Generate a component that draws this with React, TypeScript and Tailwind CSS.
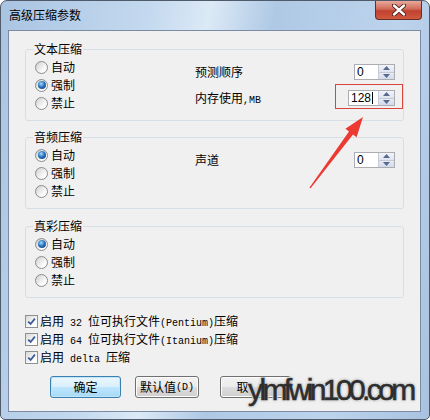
import React from 'react';

const cjk = "font-['Noto_Sans_CJK_SC',sans-serif]";
const mono = "font-['Liberation_Mono',monospace] text-[10px]";

function Radio({ label, checked }: { label: string; checked?: boolean }) {
  return (
    <div className="flex items-center gap-[3px] h-[18px]">
      <span className="w-[13px] h-[13px] rounded-full border border-[#8c8c8c] bg-[linear-gradient(135deg,#cfcfcf,#fbfbfb_70%)] flex items-center justify-center">
        {checked && (
          <span className="w-[8px] h-[8px] rounded-full bg-[radial-gradient(circle_at_40%_35%,#a9dcff,#2a76bf_45%,#0b3570)]" />
        )}
      </span>
      <span>{label}</span>
    </div>
  );
}

function Check({ children }: { children: React.ReactNode }) {
  return (
    <div className="flex items-center gap-[2px] h-[18px]">
      <span className="w-[13px] h-[13px] border border-[#8e8f8f] bg-[linear-gradient(135deg,#d8d8d8,#ffffff_75%)] flex items-center justify-center">
        <svg width="9" height="9" viewBox="0 0 9 9">
          <path d="M1.2 4.6 L3.6 7 L7.9 1.6" stroke="#3d5a99" strokeWidth="1.8" fill="none" />
        </svg>
      </span>
      <span className="whitespace-pre">{children}</span>
    </div>
  );
}

function Spinner({ value, wide }: { value: string; wide?: boolean }) {
  return (
    <div className={`flex h-[16px] border border-[#abadb3] bg-white ${wide ? 'w-[47px]' : 'w-[41px]'}`}>
      <div className="flex-1 flex items-center pl-[2px] font-['Liberation_Sans',sans-serif] text-[12px] leading-none text-black">
        {value}
        {wide && <span className="ml-[1px] w-[1px] h-[12px] bg-black" />}
      </div>
      <div className="w-[16px] flex flex-col border-l border-[#c7cbd6]">
        <div className="flex-1 flex items-center justify-center bg-[linear-gradient(#f2f4fa,#dfe4f0)] border-b border-[#c7cbd6]">
          <svg width="7" height="4" viewBox="0 0 7 4"><path d="M0 4 L3.5 0 L7 4 Z" fill="#56698f" /></svg>
        </div>
        <div className="flex-1 flex items-center justify-center bg-[linear-gradient(#e6eaf4,#d3daea)]">
          <svg width="7" height="4" viewBox="0 0 7 4"><path d="M0 0 L3.5 4 L7 0 Z" fill="#56698f" /></svg>
        </div>
      </div>
    </div>
  );
}

function Group({ title, children }: { title: string; children: React.ReactNode }) {
  return (
    <div className="relative h-[72px] border border-[#d5dfe5] rounded-[3px] flex">
      <span className="absolute left-[7px] -top-[9px] px-[1px] bg-[#f0f0f0] leading-[16px]">{title}</span>
      {children}
    </div>
  );
}

function Button({ children, primary, w }: { children: React.ReactNode; primary?: boolean; w: string }) {
  return (
    <div
      className={`${w} h-[22px] rounded-[3px] border flex items-center justify-center ${
        primary
          ? 'border-[#3c7fb1] bg-[linear-gradient(#eaf6fd,#d9f0fc_50%,#bee6fd_50%,#a7d9f5)] shadow-[inset_0_0_0_1px_#c0e4f8]'
          : 'border-[#707070] bg-[linear-gradient(#f2f2f2,#ebebeb_50%,#dddddd_50%,#cfcfcf)] shadow-[inset_0_0_0_1px_#fcfcfc]'
      }`}
    >
      {children}
    </div>
  );
}

export default function App() {
  return (
    <div className={`relative w-[430px] h-[420px] bg-white overflow-hidden ${cjk} text-[12px] text-black`}>
      <div className="w-full h-full flex flex-col rounded-t-[7px] rounded-b-[5px] border border-[#4f5b6b] bg-[linear-gradient(100deg,#a9c4e2,#c4d9ef_30%,#dce9f6_42%,#afc9e5_55%,#bcd3ec_80%,#a8c2e0)]">
        <div className="h-[29px] flex justify-between">
          <div className="pl-[8px] flex items-center h-[28px]">高级压缩参数</div>
          <div className="mr-[7px] w-[47px] h-[19px] rounded-b-[4px] border border-t-0 border-[#6e2a25] bg-[linear-gradient(#e9a99b,#d06a58_45%,#c0412f_55%,#cf5a3f)] flex items-center justify-center">
            <svg width="14" height="12" viewBox="0 0 14 12">
              <path d="M2 1.5 L12 10.5 M12 1.5 L2 10.5" stroke="#4a1a16" strokeWidth="4.2" strokeLinecap="round" />
              <path d="M2 1.5 L12 10.5 M12 1.5 L2 10.5" stroke="#ffffff" strokeWidth="2.4" strokeLinecap="round" />
            </svg>
          </div>
        </div>
        <div className="ml-[7px] mr-[8px] h-[382px] border border-[#7a8ba3] bg-[#f0f0f0] px-[16px] pt-[18px]">
          <Group title="文本压缩">
            <div className="pl-[9px] pt-[8px] w-[169px]">
              <Radio label="自动" />
              <Radio label="强制" checked />
              <Radio label="禁止" />
            </div>
            <div className="flex-1 pr-[8px] pt-[14px] flex flex-col gap-[10px]">
              <div className="flex items-center justify-between h-[16px]">
                <span>预测顺序</span>
                <Spinner value="0" />
              </div>
              <div className="flex items-center justify-between h-[16px]">
                <span>
                  内存使用<span className={mono}>,MB</span>
                </span>
                <Spinner value="128" wide />
              </div>
            </div>
          </Group>
          <div className="mt-[16px]">
            <Group title="音频压缩">
              <div className="pl-[9px] pt-[8px] w-[169px]">
                <Radio label="自动" checked />
                <Radio label="强制" />
                <Radio label="禁止" />
              </div>
              <div className="flex-1 pr-[8px] pt-[14px]">
                <div className="flex items-center justify-between h-[16px]">
                  <span>声道</span>
                  <Spinner value="0" />
                </div>
              </div>
            </Group>
          </div>
          <div className="mt-[17px]">
            <Group title="真彩压缩">
              <div className="pl-[9px] pt-[8px] w-[169px]">
                <Radio label="自动" checked />
                <Radio label="强制" />
                <Radio label="禁止" />
              </div>
            </Group>
          </div>
          <div className="mt-[14px]">
            <Check>
              启用<span className={mono}> 32 </span>位可执行文件<span className={mono}>(Pentium)</span>压缩
            </Check>
            <Check>
              启用<span className={mono}> 64 </span>位可执行文件<span className={mono}>(Itanium)</span>压缩
            </Check>
            <Check>
              启用<span className={mono}> delta </span>压缩
            </Check>
          </div>
          <div className="mt-[10px] pl-[25px] flex">
            <Button primary w="w-[71px]">确定</Button>
            <div className="ml-[14px]">
              <Button w="w-[64px]">
                默认值<span className={mono}>(D)</span>
              </Button>
            </div>
            <div className="ml-[21px]">
              <Button w="w-[71px]">
                <span className="pr-[26px]">取</span>
              </Button>
            </div>
          </div>
        </div>
      </div>

      {/* annotation overlay */}
      <div className="absolute left-[335px] top-[84px] w-[68px] h-[25px] border border-[#d9453d]" />
      <svg className="absolute left-0 top-0" width="430" height="420" viewBox="0 0 430 420">
        <polygon
          points="363,117 356.6,137.2 353,134.5 310.6,188.3 309.4,187.7 349,131.5 345.4,128.8"
          fill="#ec3a32"
        />
      </svg>
      <div className="absolute left-[248px] top-[370px] text-[30px] tracking-[-3.6px] leading-[40px] text-[#2e2e2e] font-['Liberation_Sans',sans-serif] [-webkit-text-stroke:0.6px_#2e2e2e] [text-shadow:1px_1px_0_#ddd,-1px_-1px_0_#ddd,1px_-1px_0_#ddd,-1px_1px_0_#ddd,0_0_3px_#777]">
        ylmfwin100.com
      </div>
    </div>
  );
}
